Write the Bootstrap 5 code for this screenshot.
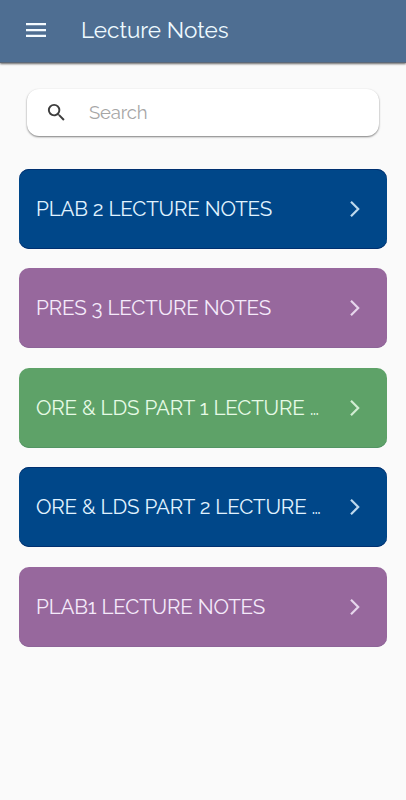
<!DOCTYPE html>
<html lang="en">
<head>
<meta charset="utf-8">
<meta name="viewport" content="width=device-width, initial-scale=1">
<title>Lecture Notes</title>
<link href="https://cdn.jsdelivr.net/npm/bootstrap@5.3.0/dist/css/bootstrap.min.css" rel="stylesheet">
<style>
body{background:#fafafa;font-family:Raleway,Lato,sans-serif;min-height:100vh;overflow:hidden}
.app-bar{height:62px;background:#4e6e92;box-shadow:0 1px 0 #5c6878,0 2px 2px rgba(0,0,0,.6);padding:0 24px 2px}
.menu-btn{width:24px;height:24px;color:#f5fbff}
.app-title{font-size:22.5px;line-height:30px;margin-left:33px;color:#eefaff}
.search-box{height:47px;margin:27px 27px 0;border-radius:12px;background:#fff;box-shadow:0 1px 2px rgba(0,0,0,.5);padding-left:18px}
.search-box input{font-size:18.5px;letter-spacing:-.15px;margin-left:21px;color:#555}
.search-box input::placeholder{color:#a6a6a6;opacity:1}
.notes{margin:33px 19px 0;gap:19.4px}
.note{height:80px;border-radius:10px;padding:0 20px 0 17px;color:#f4eafa;font-size:20.6px;line-height:30px;letter-spacing:-.18px;text-decoration:none}
.note span{padding-top:.2px}
.note svg{opacity:.85}
.blue{background:#004789;color:#e0f3ff;box-shadow:inset 0 1px #003070,inset 0 -1px #003070}
.purple{background:#97689d;box-shadow:inset 0 -1px #8d6598}
.green{background:#5ea268;color:#e6fae6;box-shadow:inset 0 -1px #539564}
</style>
<script src="https://cdn.jsdelivr.net/npm/bootstrap@5.3.0/dist/js/bootstrap.bundle.min.js"></script>
</head>
<body>
<header class="app-bar d-flex align-items-center">
  <button class="menu-btn btn p-0 border-0 d-flex" aria-label="Menu"><svg width="24" height="24" viewBox="0 0 24 24"><path d="M2 5h20v2.3H2zM2 10.9h20v2.3H2zM2 16.8h20v2.3H2z" fill="currentColor"/></svg></button>
  <h1 class="app-title mb-0 fw-normal">Lecture Notes</h1>
</header>
<main>
  <label class="search-box d-flex align-items-center">
    <svg class="flex-shrink-0" width="23" height="23" viewBox="0 0 24 24"><path fill="#3d3d3d" d="M15.5 14h-.79l-.28-.27A6.47 6.47 0 0 0 16 9.5 6.5 6.5 0 1 0 9.5 16c1.61 0 3.09-.59 4.23-1.57l.27.28v.79l5 4.99L20.49 19zm-6 0C7.01 14 5 11.99 5 9.5S7.01 5 9.5 5 14 7.01 14 9.5 11.99 14 9.5 14z"/></svg>
    <input class="form-control border-0 shadow-none bg-transparent p-0" type="text" placeholder="Search">
  </label>
  <nav class="notes d-flex flex-column">
    <a href="#" class="note blue d-flex align-items-center justify-content-between"><span class="text-nowrap">PLAB 2 LECTURE NOTES</span><svg width="24" height="24" viewBox="0 0 24 24"><path d="m8 4.8 7.2 7.2L8 19.2" fill="none" stroke="currentColor" stroke-width="2.2"/></svg></a>
    <a href="#" class="note purple d-flex align-items-center justify-content-between"><span class="text-nowrap">PRES 3 LECTURE NOTES</span><svg width="24" height="24" viewBox="0 0 24 24"><path d="m8 4.8 7.2 7.2L8 19.2" fill="none" stroke="currentColor" stroke-width="2.2"/></svg></a>
    <a href="#" class="note green d-flex align-items-center justify-content-between"><span class="text-nowrap">ORE &amp; LDS PART 1 LECTURE …</span><svg width="24" height="24" viewBox="0 0 24 24"><path d="m8 4.8 7.2 7.2L8 19.2" fill="none" stroke="currentColor" stroke-width="2.2"/></svg></a>
    <a href="#" class="note blue d-flex align-items-center justify-content-between"><span class="text-nowrap">ORE &amp; LDS PART 2 LECTURE …</span><svg width="24" height="24" viewBox="0 0 24 24"><path d="m8 4.8 7.2 7.2L8 19.2" fill="none" stroke="currentColor" stroke-width="2.2"/></svg></a>
    <a href="#" class="note purple d-flex align-items-center justify-content-between"><span class="text-nowrap">PLAB1 LECTURE NOTES</span><svg width="24" height="24" viewBox="0 0 24 24"><path d="m8 4.8 7.2 7.2L8 19.2" fill="none" stroke="currentColor" stroke-width="2.2"/></svg></a>
  </nav>
</main>
</body>
</html>
